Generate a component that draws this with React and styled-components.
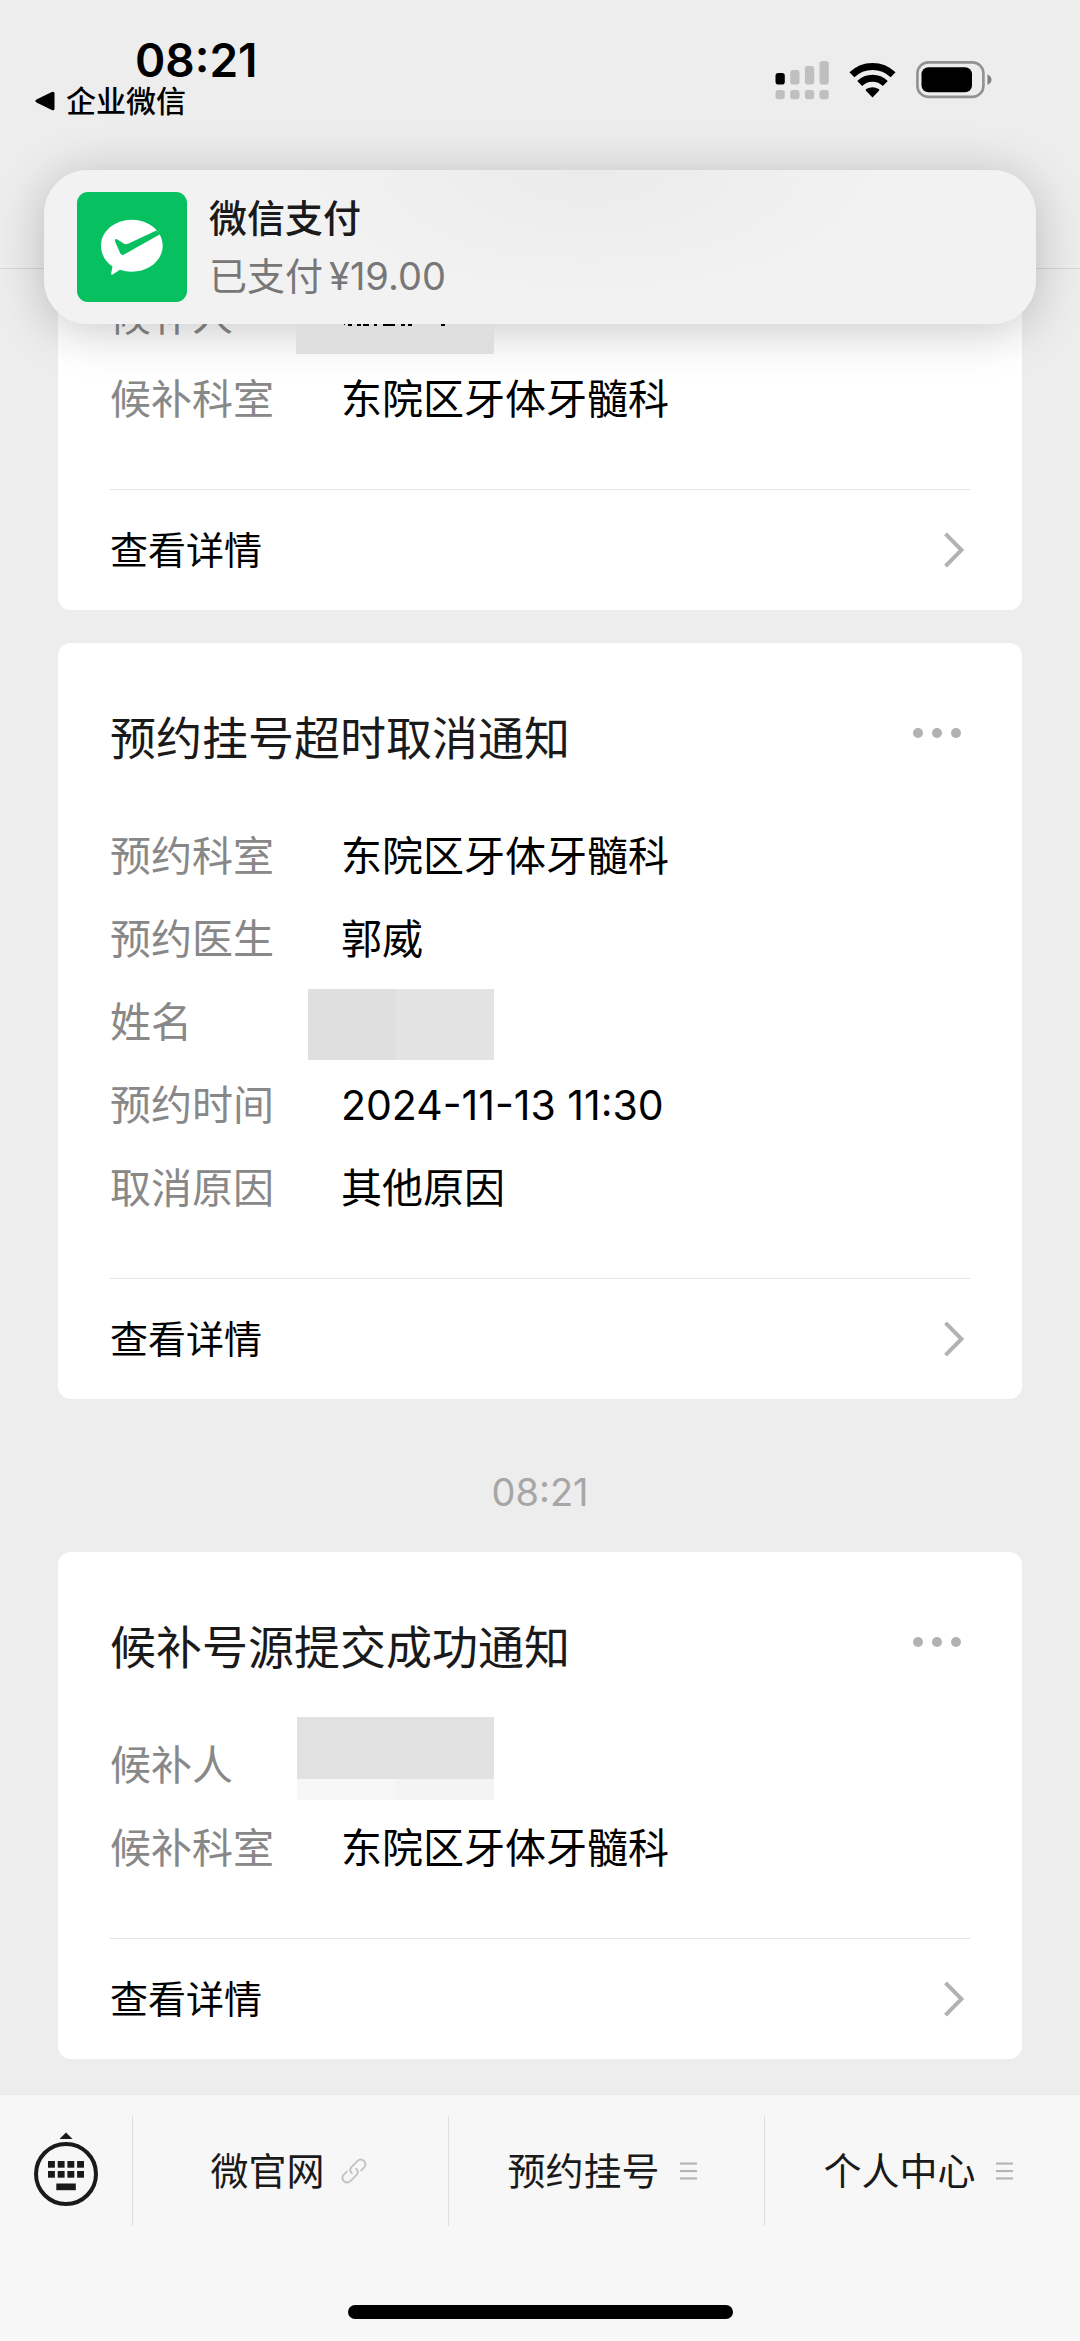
import React from "react";
import styled, { createGlobalStyle, css } from "styled-components";

const GlobalStyle = createGlobalStyle`
  body {
    margin: 0;
    background-color: #ededed;
    font-family: Inter, "Noto Sans CJK SC", sans-serif;
    color: #000000;
  }
  *, *::before, *::after {
    box-sizing: border-box;
  }
  button {
    padding: 0;
    border: 0;
    background: none;
    color: inherit;
    font: inherit;
    cursor: pointer;
  }
`;

const Screen = styled.div`
  position: relative;
  display: flex;
  flex-direction: column;
  min-height: 100vh;
`;

const Header = styled.header`
  display: flex;
  justify-content: space-between;
  align-items: flex-start;
  height: 269px;
  padding: 34px 88px 0 34px;
  border-bottom: 1px solid #d8d8d8;
`;

const StatusLeft = styled.div`
  display: flex;
  flex-direction: column;
`;

const Clock = styled.time`
  padding-left: 101px;
  font-size: 46px;
  font-weight: 600;
  line-height: 52px;
`;

const BackLink = styled.a`
  display: flex;
  align-items: center;
  gap: 11px;
  font-size: 30px;
  font-weight: 500;
  line-height: 30px;
  color: inherit;
  text-decoration: none;
`;

const StatusIcons = styled.div`
  display: flex;
  align-items: center;
  gap: 20px;
  padding-top: 26px;
`;

const Notification = styled.section`
  position: absolute;
  top: 170px;
  left: 44px;
  right: 44px;
  z-index: 2;
  display: flex;
  align-items: center;
  gap: 22px;
  height: 154px;
  padding: 0 33px;
  border-radius: 44px;
  background: radial-gradient(ellipse 300px 130px at 55% 0, #ebebeb, #f2f2f2);
  box-shadow: 0 6px 50px rgba(0, 0, 0, 0.22);
`;

const NotificationText = styled.div`
  display: flex;
  flex-direction: column;
  font-size: 38px;
  line-height: 58px;
`;

const NotificationTitle = styled.strong`
  font-weight: 500;
  color: #1a1a1a;
`;

const NotificationBody = styled.span`
  color: #777777;
`;

const Amount = styled.span`
  margin-left: 6px;
`;

const Messages = styled.main`
  display: flex;
  flex: 1;
  flex-direction: column;
  padding: 0 58px 33px;
`;

const Card = styled.article`
  padding: 60px 52px 0;
  border-radius: 13px;
  background-color: #ffffff;
  ${(props) =>
    props.$scrolled &&
    css`
      margin-bottom: 33px;
      padding-top: 6px;
      border-top-left-radius: 0;
      border-top-right-radius: 0;
    `}
`;

const CardHeader = styled.div`
  display: flex;
  justify-content: space-between;
  align-items: center;
  margin-bottom: 42px;
`;

const CardTitle = styled.h2`
  margin: 0;
  font-size: 46px;
  font-weight: 400;
  line-height: 70px;
  color: #1a1a1a;
`;

const MoreButton = styled.button`
  display: flex;
  gap: 9px;
  padding: 0 9px 10px 0;
`;

const Dot = styled.span`
  width: 10px;
  height: 10px;
  border-radius: 50%;
  background-color: #b2b2b2;
`;

const Fields = styled.dl`
  margin: 0;
  padding-bottom: 48px;
`;

const Field = styled.div`
  position: relative;
  display: flex;
  font-size: 41px;
  line-height: 83px;
`;

const FieldLabel = styled.dt`
  width: 231px;
  color: #888888;
`;

const FieldValue = styled.dd`
  margin: 0;
`;

/* grey blocks laid over a patient's name */
const Mosaic = styled.span`
  position: absolute;
  z-index: 3;
  top: ${(props) => props.$top}px;
  left: ${(props) => props.$left}px;
  right: 476px;
  display: grid;
  grid-template-columns: 1fr 98px;
  grid-template-rows: ${(props) => props.$rows};
`;

const Tile = styled.span`
  background-color: ${(props) => props.$color};
`;

const NameEdge = styled.svg`
  position: absolute;
  z-index: 3;
  top: 49px;
  left: 233px;
`;

const DetailLink = styled.a`
  display: flex;
  justify-content: space-between;
  align-items: center;
  height: 121px;
  padding-right: 6px;
  border-top: 1px solid #e5e5e5;
  font-size: 38px;
  line-height: 50px;
  color: inherit;
  text-decoration: none;
`;

const MessageTime = styled.time`
  padding: 68px 0 35px;
  font-size: 38px;
  line-height: 50px;
  text-align: center;
  color: #a6a6a6;
`;

const BottomBar = styled.footer`
  display: flex;
  flex-direction: column;
  align-items: center;
  padding-bottom: 22px;
  border-top: 1px solid #e6e6e6;
  background-color: #f7f7f7;
`;

const Menu = styled.nav`
  display: flex;
  width: 100%;
  height: 110px;
  margin: 21px 0 79px;
`;

const KeyboardButton = styled.button`
  display: flex;
  justify-content: center;
  align-items: center;
  width: 132px;
  padding-bottom: 3px;
`;

const MenuButton = styled.button`
  display: flex;
  flex: 1;
  justify-content: center;
  align-items: center;
  gap: 16px;
  padding-right: 4px;
  border-left: 1px solid #dedede;
  font-size: 38px;
  line-height: 50px;
  color: #1a1a1a;
`;

const HomeIndicator = styled.div`
  width: 385px;
  height: 14px;
  border-radius: 7px;
  background-color: #000000;
`;

const BackArrow = () => (
  <svg width="21" height="20" viewBox="0 0 21 20" aria-hidden="true">
    <path d="M2.5 8.6 17.8.9Q20.5 0 20.5 2.5V17.5Q20.5 20 17.8 19.1L2.5 11.4Q0 10 2.5 8.6Z" />
  </svg>
);

const SignalIcon = () => (
  <svg width="54" height="40" viewBox="0 0 54 40" fill="#bfbfbf" aria-hidden="true">
    <rect x="0.5" y="13" width="9.3" height="11.5" rx="2.8" fill="#000" />
    <rect x="15.2" y="10" width="9.3" height="14.5" rx="2.8" />
    <rect x="29.9" y="6" width="9.3" height="18.5" rx="2.8" />
    <rect x="44.5" y="1" width="9.3" height="23.5" rx="2.8" />
    <rect x="0.5" y="30" width="9.3" height="9.3" rx="2.8" />
    <rect x="15.2" y="30" width="9.3" height="9.3" rx="2.8" />
    <rect x="29.9" y="30" width="9.3" height="9.3" rx="2.8" />
    <rect x="44.5" y="30" width="9.3" height="9.3" rx="2.8" />
  </svg>
);

const WifiIcon = () => (
  <svg width="47" height="36" viewBox="0 0 47 36" aria-hidden="true">
    <g fill="none" stroke="#000" strokeWidth="7">
      <path d="M2.9 12.8A29.5 29.5 0 0 1 44.1 12.8" />
      <path d="M10.7 21.4A18.2 18.2 0 0 1 36.3 21.4" />
    </g>
    <path d="M17 28.8Q16.2 27.8 17.3 27.1 23.5 23.300 29.7 27.1 30.8 27.8 30 28.8L23.5 35.6Z" />
  </svg>
);

const BatteryIcon = () => (
  <svg width="76" height="38" viewBox="0 0 76 38" aria-hidden="true">
    <rect x="1.4" y="1.4" width="66" height="34.5" rx="11" fill="none" stroke="#919191" strokeWidth="2.6" />
    <rect x="5.5" y="6.2" width="50.5" height="25" rx="7" />
    <path d="M71.5 13.5Q75.5 15.5 75.5 18.7T71.5 23.9Z" fill="#808080" />
  </svg>
);

const PayLogo = () => (
  <svg width="110" height="110" viewBox="0 0 110 110" aria-hidden="true">
    <rect width="110" height="110" rx="11" fill="#07c160" />
    <path
      fill="#fff"
      d="M54.8 27.7C72 27.7 85.7 39.3 85.700 53.7S72 79.7 54.8 79.7C50.500 79.700 46.500 79 43 77.800L36 82.300Q33.800 83.500 34.200 81L35.500 74.500C28.300 69.800 24 62.200 24 53.700 24 39.300 37.700 27.700 54.800 27.700Z"
    />
    <path
      fill="#07c160"
      d="M79.3 38.4 51 51.7Q48.5 52.800 46.300 51.300L40.500 47.500Q37.300 46 38 49.300L43.300 61.500Q44.800 64 47.500 62.300L83.500 42Z"
    />
  </svg>
);

const Chevron = () => (
  <svg width="20" height="36" viewBox="0 0 20 36" aria-hidden="true">
    <path d="M1.5 1.8 17.5 18 1.5 34.2" fill="none" stroke="#b2b2b2" strokeWidth="4" />
  </svg>
);

const KeyboardIcon = () => (
  <svg width="66" height="76" viewBox="0 0 66 76" fill="#1a1a1a" aria-hidden="true">
    <path d="M33 .5 39.5 7H26.5Z" />
    <circle cx="33" cy="42" r="30" fill="none" stroke="#1a1a1a" strokeWidth="4" />
    {[15, 24.7, 34.4, 44.1].map((x) => (
      <React.Fragment key={x}>
        <rect x={x} y="29" width="6.9" height="6.7" />
        <rect x={x} y="39" width="6.9" height="6.7" />
      </React.Fragment>
    ))}
    <rect x="23.3" y="51.5" width="19.5" height="6.7" />
  </svg>
);

const LinkIcon = () => (
  <svg width="26" height="26" viewBox="0 0 26 26" fill="none" stroke="#c3c3c3" strokeWidth="1.9" strokeLinecap="round" aria-hidden="true">
    <path d="M10.8 15.2C8.5 12.8 9 10.7 10.5 9.2L16.3 3.2C18.2 1.2 20.8.9 22.9 2.8 25.1 5 24.9 7.6 23 9.6L20.2 12.4" />
    <path d="M15.2 10.8C17.5 13.2 17 15.3 15.5 16.8L9.7 22.8C7.8 24.8 5.2 25.1 3.1 23.2.9 21 1.1 18.4 3 16.4L5.8 13.6" />
  </svg>
);

const ListIcon = () => (
  <svg width="26" height="26" viewBox="0 0 26 26" fill="#b4b4b4" aria-hidden="true">
    <rect x="4" y="4.5" width="17" height="2.1" />
    <rect x="4" y="12" width="17" height="2.1" />
    <rect x="4" y="19.4" width="17" height="2.1" />
  </svg>
);

const MessageCard = ({ title, scrolled, children }) => (
  <Card $scrolled={scrolled}>
    {title && (
      <CardHeader>
        <CardTitle>{title}</CardTitle>
        <MoreButton type="button" aria-label="更多">
          <Dot />
          <Dot />
          <Dot />
        </MoreButton>
      </CardHeader>
    )}
    <Fields>{children}</Fields>
    <DetailLink href="#detail">
      查看详情
      <Chevron />
    </DetailLink>
  </Card>
);

const Row = ({ label, value, children }) => (
  <Field>
    <FieldLabel>{label}</FieldLabel>
    <FieldValue>
      {value}
      {children}
    </FieldValue>
  </Field>
);

const App = () => {
  return (
    <>
      <GlobalStyle />
      <Screen>
        <Header>
          <StatusLeft>
            <Clock>08:21</Clock>
            <BackLink href="#back">
              <BackArrow />
              企业微信
            </BackLink>
          </StatusLeft>
          <StatusIcons>
            <SignalIcon />
            <WifiIcon />
            <BatteryIcon />
          </StatusIcons>
        </Header>

        <Notification>
          <PayLogo />
          <NotificationText>
            <NotificationTitle>微信支付</NotificationTitle>
            <NotificationBody>
              已支付<Amount>¥19.00</Amount>
            </NotificationBody>
          </NotificationText>
        </Notification>

        <Messages>
          <MessageCard scrolled>
            <Row label="候补人">
              <Mosaic $top={49} $left={186} $rows="30px">
                <Tile $color="#dedede" />
                <Tile $color="#dedede" />
              </Mosaic>
              <NameEdge width="104" height="2" viewBox="0 0 104 2" aria-hidden="true">
                <path d="M1 0h1v1h-1zM5 0h4v2h-4zM14 0h4v2h-4zM20 0h6v2h-6zM31 0h3v2h-3zM40 0h12v2h-12zM58 0h4v2h-4zM65 0h4v2h-4zM98 0h4v2h-4z" />
              </NameEdge>
            </Row>
            <Row label="候补科室" value="东院区牙体牙髓科" />
          </MessageCard>

          <MessageCard title="预约挂号超时取消通知">
            <Row label="预约科室" value="东院区牙体牙髓科" />
            <Row label="预约医生" value="郭威" />
            <Row label="姓名">
              <Mosaic $top={8} $left={198} $rows="71px">
                <Tile $color="#dfdfdf" />
                <Tile $color="#e3e3e3" />
              </Mosaic>
            </Row>
            <Row label="预约时间" value="2024-11-13 11:30" />
            <Row label="取消原因" value="其他原因" />
          </MessageCard>

          <MessageTime>08:21</MessageTime>

          <MessageCard title="候补号源提交成功通知">
            <Row label="候补人">
              <Mosaic $top={-7} $left={187} $rows="62px 21px">
                <Tile $color="#e1e1e1" />
                <Tile $color="#e2e2e2" />
                <Tile $color="#f7f7f7" />
                <Tile $color="#f4f4f4" />
              </Mosaic>
            </Row>
            <Row label="候补科室" value="东院区牙体牙髓科" />
          </MessageCard>
        </Messages>

        <BottomBar>
          <Menu>
            <KeyboardButton type="button" aria-label="键盘">
              <KeyboardIcon />
            </KeyboardButton>
            <MenuButton type="button">
              微官网
              <LinkIcon />
            </MenuButton>
            <MenuButton type="button">
              预约挂号
              <ListIcon />
            </MenuButton>
            <MenuButton type="button">
              个人中心
              <ListIcon />
            </MenuButton>
          </Menu>
          <HomeIndicator />
        </BottomBar>
      </Screen>
    </>
  );
};

export default App;
